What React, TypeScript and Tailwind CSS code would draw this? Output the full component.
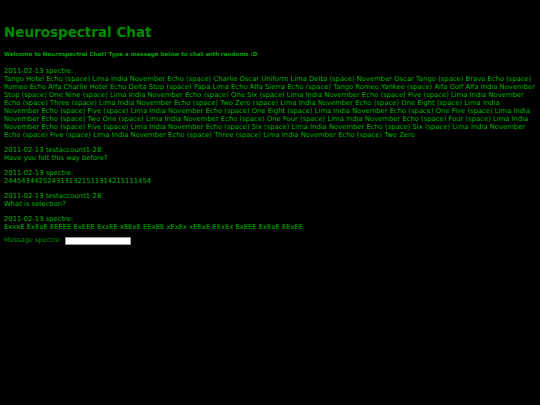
import React from "react";

const long =
  "Tango Hotel Echo (space) Lima India November Echo (space) Charlie Oscar Uniform Lima Delta (space) November Oscar Tango (space) Bravo Echo (space) Romeo Echo Alfa Charlie Hotel Echo Delta Stop (space) Papa Lima Echo Alfa Sierra Echo (space) Tango Romeo Yankee (space) Alfa Golf Alfa India November Stop (space) One Nine (space) Lima India November Echo (space) One Six (space) Lima India November Echo (space) Five (space) Lima India November Echo (space) Three (space) Lima India November Echo (space) Two Zero (space) Lima India November Echo (space) One Eight (space) Lima India November Echo (space) Five (space) Lima India November Echo (space) One Eight (space) Lima India November Echo (space) One Five (space) Lima India November Echo (space) Two One (space) Lima India November Echo (space) One Four (space) Lima India November Echo (space) Four (space) Lima India November Echo (space) Five (space) Lima India November Echo (space) Six (space) Lima India November Echo (space) Six (space) Lima India November Echo (space) Five (space) Lima India November Echo (space) Three (space) Lima India November Echo (space) Two Zero";

const msgs: [string, string][] = [
  ["2011-02-13 spectre:", long],
  ["2011-02-13 testaccount1-28:", "Have you felt this way before?"],
  ["2011-02-13 spectre:", "2445434425243131321511314215111454"],
  ["2011-02-13 testaccount1-28:", "What is selection?"],
  ["2011-02-13 spectre:", "ExxxE ExExE EEEEE ExEEE ExxEE xEExE EExEE xExEx xEExE EExEx ExEEE ExExE EExEE"],
];

export default function App() {
  return (
    <div
      className="w-[540px] h-[405px] bg-black px-[4px] pt-[23px] overflow-hidden"
      style={{ fontFamily: '"DejaVu Sans", Verdana, sans-serif' }}
    >
      <h1 className="text-[13.5px] leading-[18px] font-bold text-[#008a00]">Neurospectral Chat</h1>
      <p className="mt-[9px] text-[5.6px] leading-[9px] font-bold text-[#00a000]">
        Welcome to Neurospectral Chat! Type a message below to chat with randoms :D
      </p>
      <div className="mt-[8px] flex flex-col gap-[7px] text-[6.8px] leading-[8px] text-[#00b400]">
        {msgs.map(([h, b], i) => (
          <div key={i}>
            <div>{h}</div>
            <div>{b}</div>
          </div>
        ))}
      </div>
      <div className="mt-[5px] flex items-center gap-[3px] text-[6.6px] leading-[9px] text-[#009000]">
        <span>Message spectre:</span>
        <div className="w-[66px] h-[8px] bg-white border border-[#999]"></div>
      </div>
    </div>
  );
}
